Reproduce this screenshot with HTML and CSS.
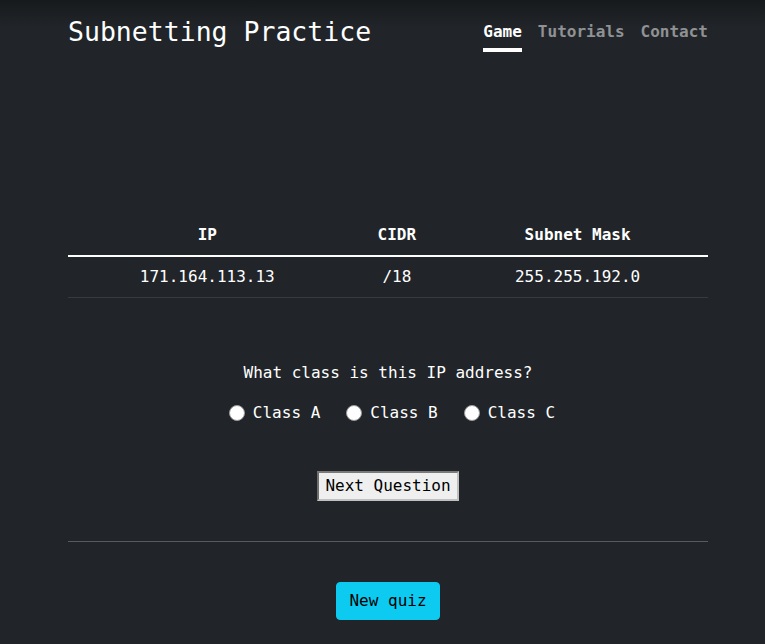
FILE: index.html
```html
<!DOCTYPE html>
<html lang="en">
<head>
<meta charset="utf-8">
<title>Subnetting Practice</title>
<link rel="stylesheet" href="styles.css">
</head>
<body>
<div class="page">
  <header class="masthead">
    <h1 class="brand">Subnetting Practice</h1>
    <nav class="nav">
      <a class="nav-link active" href="#">Game</a>
      <a class="nav-link" href="#">Tutorials</a>
      <a class="nav-link" href="#">Contact</a>
    </nav>
  </header>
  <main class="main">
    <table class="quiz-table">
      <thead>
        <tr><th>IP</th><th>CIDR</th><th>Subnet Mask</th></tr>
      </thead>
      <tbody>
        <tr><td>171.164.113.13</td><td>/18</td><td>255.255.192.0</td></tr>
      </tbody>
    </table>
    <p class="question">What class is this IP address?</p>
    <div class="options">
      <label class="option"><input type="radio" name="cls" class="radio"><span>Class A</span></label>
      <label class="option"><input type="radio" name="cls" class="radio"><span>Class B</span></label>
      <label class="option"><input type="radio" name="cls" class="radio"><span>Class C</span></label>
    </div>
    <div class="next-row"><button class="next-btn" type="button">Next Question</button></div>
    <hr class="divider">
    <div class="new-row"><button class="new-btn" type="button">New quiz</button></div>
  </main>
</div>
</body>
</html>
```
FILE: styles.css
```css
html, body {
  margin: 0;
  padding: 0;
}
body {
  background: linear-gradient(rgba(0,0,0,0.3), rgba(0,0,0,0) 28px) no-repeat, #212529;
  color: #fff;
  font-family: "DejaVu Sans Mono", monospace;
  font-size: 16px;
  line-height: 24px;
  min-height: 644px;
}
.page {
  width: 640px;
  margin-left: 68px;
}
.masthead {
  display: flex;
  justify-content: space-between;
  align-items: flex-start;
  padding-top: 15px;
}
.brand {
  margin: 1px 0 0 0;
  font-size: 26.5px;
  line-height: 32px;
  font-weight: normal;
}
.nav {
  display: flex;
  margin-top: 1px;
}
.nav-link {
  margin-left: 16px;
  padding: 4px 0;
  border-bottom: 4px solid transparent;
  color: rgba(255,255,255,0.5);
  font-weight: bold;
  text-decoration: none;
}
.nav-link.active {
  color: #fff;
  border-bottom-color: #fff;
}
.main {
  padding-top: 163px;
}
.quiz-table {
  width: 100%;
  border-collapse: collapse;
  text-align: center;
}
.quiz-table th,
.quiz-table td {
  padding: 8px;
}
.quiz-table th {
  font-weight: bold;
  border-bottom: 2px solid #fff;
}
.quiz-table td {
  border-bottom: 1px solid #373b3e;
}
.question {
  margin: 63px 0 0 0;
  text-align: center;
}
.options {
  display: flex;
  justify-content: center;
  gap: 26px;
  margin-top: 16px;
  padding-left: 8px;
}
.option {
  display: flex;
  align-items: center;
  gap: 8px;
}
.radio {
  appearance: none;
  -webkit-appearance: none;
  width: 16px;
  height: 16px;
  margin: 0;
  border-radius: 50%;
  background: #fff;
  border: 1px solid #9a9a9a;
  box-sizing: border-box;
}
.next-row {
  display: flex;
  justify-content: center;
  margin-top: 46px;
}
.next-btn {
  font-family: inherit;
  font-size: 16px;
  line-height: 24px;
  border-radius: 0;
  padding: 1px 6px;
  color: #000;
  background: #efefef;
  border-style: solid;
  border-width: 2px;
  border-color: #7a7a7a #c0c0c0 #c0c0c0 #6e6e6e;
}
.divider {
  margin: 40px 0 0 0;
  border: 0;
  border-top: 1px solid rgba(255,255,255,0.25);
  height: 0;
}
.new-row {
  display: flex;
  justify-content: center;
  margin-top: 40px;
}
.new-btn {
  font-family: inherit;
  font-size: 16px;
  line-height: 24px;
  padding: 6px 12px;
  color: #000;
  background: #0dcaf0;
  border: 1px solid #0dcaf0;
  border-radius: 4px;
}
```
